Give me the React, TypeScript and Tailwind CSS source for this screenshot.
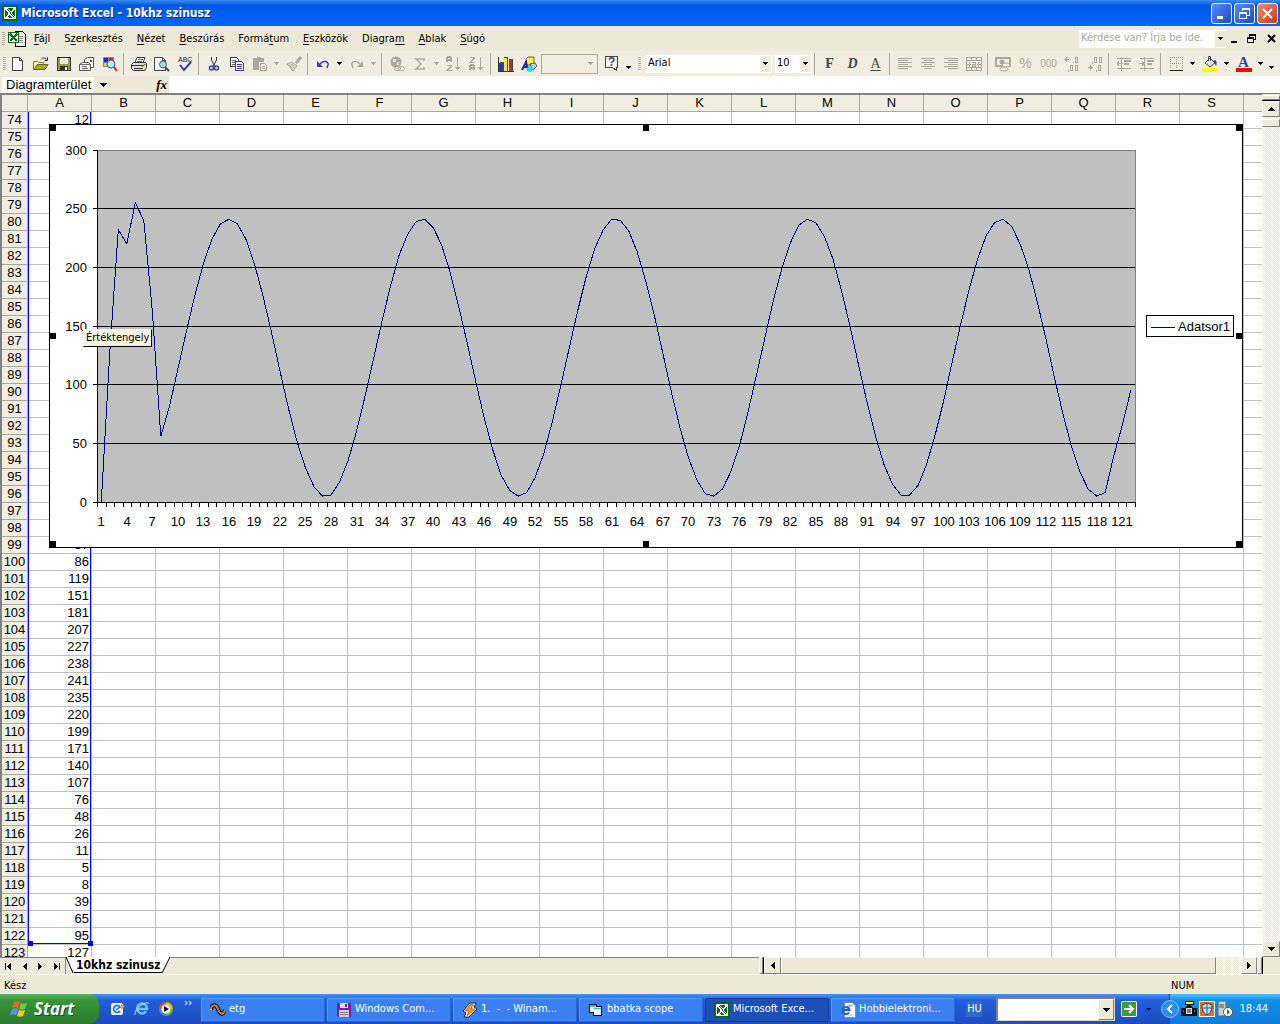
import { type ReactNode } from "react";
import clsx from "clsx";

// the last two columns have no heading of their own yet
const COLUMNS = [..."ABCDEFGHIJKLMNOPQRS".split(""), "", ""];
const FIRST_ROW = 74;
const LAST_ROW = 123;

const HEAD = [0, 128, 232, 220, 255, 240, 163, 56];
const TAIL = [57, 86, 119, 151, 181, 207, 227, 238, 241, 235, 220, 199, 171, 140, 107, 76, 48, 26, 11, 5, 8, 39, 65, 95];
const SAMPLES = [
    ...HEAD,
    ...Array.from({ length: 90 }, (_, i) =>
        Math.round(123 + 118.5 * Math.cos((2 * Math.PI * (i + 9 - 15.99)) / 22.72))
    ),
    ...TAIL,
];

// rows 75-98 lie completely behind the chart
const cellValue = (row: number) => {
    if (row === 74) return 12;
    if (row === 123) return 127;
    return row < 99 ? null : SAMPLES[row - 1];
};

/* ---------- small pieces ---------- */

function Svg({ children, w = 16, h = 16, smooth }: { children: ReactNode, w?: number, h?: number, smooth?: boolean }) {
    return (
        <svg
            width={w}
            height={h}
            viewBox={`0 0 ${w} ${h}`}
            fill="none"
            shapeRendering={smooth ? "auto" : "crispEdges"}
            className="shrink-0"
            aria-hidden="true"
        >
            {children}
        </svg>
    );
}

function Down() {
    return <Svg w={5} h={3}><path d="M0 0h5v1H0zM1 1h3v1H1zM2 2h1v1H2z" fill="currentColor" /></Svg>;
}

function Up() {
    return <Svg w={7} h={4}><path d="M3 0h1v1H3zM2 1h3v1H2zM1 2h5v1H1zM0 3h7v1H0z" fill="currentColor" /></Svg>;
}

function DownBig() {
    return <Svg w={7} h={4}><path d="M0 0h7v1H0zM1 1h5v1H1zM2 2h3v1H2zM3 3h1v1H3z" fill="currentColor" /></Svg>;
}

function Side({ right, bar }: { right?: boolean, bar?: boolean }) {
    return (
        <Svg w={7} h={7}>
            <g transform={right ? "matrix(-1 0 0 1 7 0)" : undefined} fill="currentColor">
                <path d="M2 3h1v1H2zM3 2h1v3H3zM4 1h1v5H4zM5 0h1v7H5z" />
                {bar && <path d="M0 0h1v7H0z" />}
            </g>
        </Svg>
    );
}

function Grip() {
    return (
        <Svg w={3} h={16}>
            <path d="M0 1h3v1H0zM0 3h3v1H0zM0 5h3v1H0zM0 7h3v1H0zM0 9h3v1H0zM0 11h3v1H0zM0 13h3v1H0z" fill="#b5b2a2" />
        </Svg>
    );
}

function Tool({ label, children, off }: { label: string, children: ReactNode, off?: boolean }) {
    return (
        <button
            aria-label={label}
            disabled={off}
            className={clsx("flex h-[22px] w-[23px] shrink-0 items-center justify-center", off ? "text-[#aca899]" : "text-black")}
        >
            {children}
        </button>
    );
}

function Drop({ label, off }: { label: string, off?: boolean }) {
    return (
        <button
            aria-label={label}
            disabled={off}
            className={clsx("flex h-[22px] w-[11px] shrink-0 items-center justify-center", off ? "text-[#aca899]" : "text-black")}
        >
            <Down />
        </button>
    );
}

function Sep() {
    return <span className="mx-[2px] h-[22px] w-[2px] shrink-0 border-l border-[#aca899]" />;
}

function ExcelIcon() {
    return (
        <Svg>
            <rect width="16" height="16" fill="#0a6b12" />
            <path d="M2 2h12v12H2zM3 3v10h10V3z" fill="#fff" fillRule="evenodd" />
            <path d="M3 3h3l7 9v1h-3L3 4z" fill="#fff" />
            <path d="M5 4h1l6 8h-1z" fill="#0a6b12" />
            <path d="M12.500 3.500L9 7.500M7 9.500l-3.500 3.500M3 12.500h4" stroke="#fff" strokeWidth="1.500" />
        </Svg>
    );
}

function Align({ kind }: { kind: "left" | "center" | "right" }) {
    const x = { left: 1, center: 4, right: 5 }[kind];
    const w = kind === "center" ? 8 : 10;
    return (
        <Svg>
            {[2, 4, 6, 8, 10, 12].map((y, i) => (
                <rect key={y} x={i % 2 ? x : 1} y={y} width={i % 2 ? w : 14} height="1" fill="currentColor" />
            ))}
        </Svg>
    );
}

function Decimal({ left }: { left?: boolean }) {
    return (
        <Svg>
            {/* zeros are 3x5 boxes with a comma in front */}
            {left ? (
                <path d="M11.500 1.500h2v5h-2zM6.500 9.500h2v5h-2zM11.500 9.500h2v5h-2zM9 6v1M4 14v2M0 3.500h5M2.500 1v5M1.500 2v3" stroke="currentColor" />
            ) : (
                <path d="M7.500 1.500h2v5h-2zM12.500 1.500h2v5h-2zM11.500 9.500h2v5h-2zM5 6v2M9 14v2M1 11.500h5M3.500 9v5M4.500 10v3" stroke="currentColor" />
            )}
        </Svg>
    );
}

function Indent({ right }: { right?: boolean }) {
    return (
        <Svg>
            <path d="M1 2.500h14M8 5.500h7M8 8.500h5M1 12.500h14M5.500 1v14" stroke="currentColor" />
            <path d="M8 4.500h7M8 7.500h5" stroke="currentColor" />
            <path d={right ? "M0 7.500h5M5 7.500l-2-2M5 7.500l-2 2" : "M1 7.500h6M1 7.500l2-2M1 7.500l2 2"} stroke="currentColor" />
        </Svg>
    );
}

function Sorting({ desc }: { desc?: boolean }) {
    const a = "M1 6V2l1-1h2l1 1v4M1 4h4";
    const z = "M1 1.500h4.500L1 6.500h5";
    return (
        <Svg>
            <path d={desc ? z : a} stroke="currentColor" strokeWidth="1.500" />
            <path d={desc ? a : z} transform="translate(0 8)" stroke="currentColor" strokeWidth="1.500" />
            <path d="M11 1h1v13h-1zM9 11h5v1H9zM10 12h3v1h-3z" fill="currentColor" />
        </Svg>
    );
}

/* ---------- bars ---------- */

function TitleBar() {
    const btn = "flex size-[21px] items-center justify-center rounded-[3px] border border-white";
    return (
        <header className="flex h-[26px] shrink-0 items-center gap-[3px] bg-linear-to-b from-[#3b8cf0] via-[#0058e6] via-20% to-[#0066ff] px-[2px]">
            <ExcelIcon />
            <h1 className="flex-1 font-[DejaVu_Sans_Condensed,sans-serif] text-[12px] font-bold text-white [text-shadow:1px_1px_#0a2a80]">
                Microsoft Excel - 10khz szinusz
            </h1>
            <div className="flex gap-[2px]">
                <button aria-label="Kis méret" className={clsx(btn, "bg-linear-to-br from-[#5b8cf0] to-[#1a48c8]")}>
                    <Svg w={13} h={13}><path d="M2 9h6v3H2z" fill="#fff" /></Svg>
                </button>
                <button aria-label="Előző méret" className={clsx(btn, "bg-linear-to-br from-[#5b8cf0] to-[#1a48c8]")}>
                    <Svg w={13} h={13}>
                        <path d="M4 1h8v8H9V8h2V3H5v1H4z" fill="#fff" />
                        <path d="M1 5h8v7H1zM2 7v4h6V7z" fill="#fff" fillRule="evenodd" />
                    </Svg>
                </button>
                <button aria-label="Bezárás" className={clsx(btn, "bg-linear-to-br from-[#f0886c] to-[#c83410]")}>
                    <Svg w={13} h={13} smooth><path d="M2 2l9 9M11 2l-9 9" stroke="#fff" strokeWidth="2" /></Svg>
                </button>
            </div>
        </header>
    );
}

// the underlined letter sits in the middle
const MENUS: [string, string, string][] = [
    ["", "F", "ájl"],
    ["S", "z", "erkesztés"],
    ["", "N", "ézet"],
    ["", "B", "eszúrás"],
    ["Formá", "t", "um"],
    ["", "E", "szközök"],
    ["Diagra", "m", ""],
    ["", "A", "blak"],
    ["", "S", "úgó"],
];

function MenuBar() {
    return (
        <nav className="flex h-[25px] shrink-0 items-center pr-1 pl-[2px]">
            <Grip />
            <span className="mr-px ml-[3px]">
                <Svg w={18} h={17}>
                    <path d="M7 1h7l3 3v12H7z" fill="#fff" stroke="#000" />
                    <path d="M11 6h4M11 8h4M11 10h4M11 12h4" stroke="#888" />
                    <rect x="0" y="2" width="11" height="11" fill="#0a6b12" />
                    <rect x="1" y="3" width="9" height="9" fill="#fff" />
                    <path d="M2 4l7 7M9 4l-7 7" stroke="#0a6b12" strokeWidth="2" />
                </Svg>
            </span>
            {MENUS.map(([before, key, after]) => (
                <button key={before + key + after} className="px-[7px] text-[11px] leading-4">
                    {before}<u className="underline-offset-2">{key}</u>{after}
                </button>
            ))}
            <div className="ml-auto flex h-[18px] items-center bg-white">
                <input
                    aria-label="Kérdés"
                    placeholder="Kérdése van? Írja be ide."
                    className="w-[136px] pl-[2px] text-[11px] placeholder:text-[#aca899]"
                />
                <button aria-label="Kérdések listája" className="flex h-4 w-[11px] items-center justify-center bg-[#ece9d8]"><Down /></button>
            </div>
            <div className="ml-1 flex items-center gap-[9px]">
                <button aria-label="Füzet kis mérete"><Svg w={8} h={9}><path d="M1 7h6v2H1z" fill="#000" /></Svg></button>
                <button aria-label="Füzet előző mérete">
                    <Svg w={9} h={9}>
                        <path d="M2 0h7v6H7V5h1V2H3v1H2zM0 3h7v6H0zM1 5v3h5V5z" fill="#000" fillRule="evenodd" />
                    </Svg>
                </button>
                <button aria-label="Füzet bezárása" className="ml-[2px]">
                    <Svg w={9} h={9} smooth><path d="M1 1l7 7M8 1l-7 7" stroke="#000" strokeWidth="2" /></Svg>
                </button>
            </div>
        </nav>
    );
}

function ToolBar() {
    return (
        <div className="flex h-[25px] shrink-0 items-center overflow-hidden bg-[#f0eee1] pl-[3px]">
            <Grip />
            <Tool label="Új">
                <Svg><path d="M2.500 1.500h7l3 3v10h-10z" fill="#fff" stroke="#444" /><path d="M9.500 1.500v3h3" stroke="#444" /></Svg>
            </Tool>
            <Tool label="Megnyitás">
                <Svg smooth>
                    <path d="M0.500 13.500v-8h4l1 1h5v2" fill="#ffff99" stroke="#777730" />
                    <path d="M1 13.500l3-5h11l-3 5z" fill="#a5a52a" stroke="#666620" />
                    <path d="M8 3.500c2-3 5-1 6 1M14.500 1.500v3h-3" stroke="#333" />
                </Svg>
            </Tool>
            <Tool label="Mentés">
                <Svg>
                    <rect x="1.500" y="1.500" width="13" height="13" fill="#9c9c3a" stroke="#333" />
                    <rect x="4" y="2" width="8" height="6" fill="#eee" />
                    <rect x="4" y="10" width="8" height="4" fill="#333" />
                    <rect x="9" y="11" width="2" height="3" fill="#fff" />
                </Svg>
            </Tool>
            <Tool label="E-mail">
                <Svg smooth>
                    <path d="M5.500 7V3.500l3-2h6v10h-4" fill="#fff" stroke="#555" />
                    <path d="M11 4h2v2h-2z" fill="#d22" />
                    <path d="M0.500 8.500l3-2h6l2 2v6h-11z" fill="#fff" stroke="#555" />
                    <path d="M0.500 8.500h11M3 10.500h5M3 12.500h6" stroke="#666688" />
                </Svg>
            </Tool>
            <Tool label="Keresés">
                <Svg smooth>
                    <rect x="1" y="1" width="11" height="10" fill="#888" />
                    <path d="M2 2h4v4H2z" fill="#22c" /><path d="M7 2h4v3H7z" fill="#d22" />
                    <path d="M2 7h4v3H2z" fill="#dd2" />
                    <circle cx="9" cy="8" r="4" fill="#aef" stroke="#555" />
                    <path d="M12 11l3 4" stroke="#d22" strokeWidth="2" />
                </Svg>
            </Tool>
            <Sep />
            <Tool label="Nyomtatás">
                <Svg smooth>
                    <path d="M4 6.500l2-5h8l-2 5" fill="#fff" stroke="#333" />
                    <path d="M7 3.500h5M6 5.500h5" stroke="#666" />
                    <path d="M0.500 8.500l2-2h12l1 1v4l-2 3h-11l-2-2z" fill="#ddd" stroke="#333" />
                    <path d="M1 9.500h12l2-2M3 12.500h9" stroke="#333" />
                    <path d="M10 10h2v1h-2z" fill="#cc0" />
                </Svg>
            </Tool>
            <Tool label="Nyomtatási kép">
                <Svg smooth>
                    <path d="M0.500 1.500h8l3 3v10h-11z" fill="#fff" stroke="#444" />
                    <path d="M8.500 1.500v3h3" stroke="#444" />
                    <circle cx="9" cy="8.500" r="3.500" fill="#9dd" stroke="#555" />
                    <path d="M11 11l4 4" stroke="#444" strokeWidth="2" />
                </Svg>
            </Tool>
            <Tool label="Helyesírás">
                <Svg smooth>
                    <text x="1" y="6" fontSize="7" fontFamily="Liberation Sans" fill="#222">ABC</text>
                    <path d="M3 9l4 5 7-8" stroke="#3a3aa8" strokeWidth="2" />
                </Svg>
            </Tool>
            <Sep />
            <Tool label="Kivágás">
                <Svg smooth>
                    <path d="M5.500 1v3l3 6M10.500 1v3l-3 6" stroke="#333" />
                    <circle cx="5.500" cy="12" r="2" stroke="#3a3aa8" strokeWidth="1.500" />
                    <circle cx="10.500" cy="12" r="2" stroke="#3a3aa8" strokeWidth="1.500" />
                </Svg>
            </Tool>
            <Tool label="Másolás">
                <Svg>
                    <path d="M1.500 1.500h6l2 2v7h-8z" fill="#fff" stroke="#444" />
                    <path d="M3 4.500h4M3 6.500h4M3 8.500h3" stroke="#666" />
                    <path d="M6.500 5.500h6l2 2v7h-8z" fill="#fff" stroke="#3a3aa8" />
                    <path d="M8 8.500h5M8 10.500h5M8 12.500h5" stroke="#3a3aa8" />
                </Svg>
            </Tool>
            <Tool label="Beillesztés" off>
                <Svg>
                    <path d="M1 2h3l1-1h3l1 1h3v4H7v8H1z" fill="#aca899" />
                    <path d="M8.500 7.500h4l2 2v5h-6z" fill="#f0eee1" stroke="#aca899" />
                    <path d="M10 10.500h3M10 12.500h3" stroke="#aca899" />
                </Svg>
            </Tool>
            <Drop label="Beillesztés lista" off />
            <Tool label="Formátummásoló" off>
                <Svg smooth>
                    <path d="M15 1l-5 6" stroke="#aca899" strokeWidth="3" />
                    <path d="M1 8l5-2 5 4-4 5z" fill="#d8d5c6" stroke="#aca899" />
                    <path d="M3 9l4 4M5 8l4 4" stroke="#aca899" />
                </Svg>
            </Tool>
            <Sep />
            <Tool label="Visszavonás">
                <Svg w={14} h={10} smooth>
                    <path d="M1 2v6h6z" fill="#3a3aa8" />
                    <path d="M4 5c3-4 9-3 8 1l-1 3" stroke="#3a3aa8" strokeWidth="1.500" />
                </Svg>
            </Tool>
            <Drop label="Visszavonás lista" />
            <Tool label="Ismét" off>
                <Svg w={14} h={10} smooth>
                    <path d="M13 2v6H7z" fill="currentColor" />
                    <path d="M10 5C7 1 1 2 2 6l1 3" stroke="currentColor" strokeWidth="1.500" />
                </Svg>
            </Tool>
            <Drop label="Ismét lista" off />
            <Sep />
            <Tool label="Hivatkozás" off>
                <Svg smooth>
                    <circle cx="7" cy="6" r="5.500" fill="#aca899" />
                    <path d="M4 3h3v3H4zM8 6h2v3H8z" fill="#e4e1d2" />
                    <rect x="5.500" y="10.500" width="6" height="4" rx="2" fill="#f0eee1" stroke="#aca899" />
                    <rect x="9.500" y="10.500" width="6" height="4" rx="2" stroke="#aca899" />
                </Svg>
            </Tool>
            <Tool label="AutoSzum" off>
                <Svg smooth><path d="M12 5V3H4l5 5-5 5h8v-2" stroke="currentColor" strokeWidth="1.500" /></Svg>
            </Tool>
            <Drop label="AutoSzum lista" off />
            <Tool label="Növekvő rendezés" off><Sorting /></Tool>
            <Tool label="Csökkenő rendezés" off><Sorting desc /></Tool>
            <Sep />
            <Tool label="Diagram varázsló">
                <Svg>
                    <path d="M0.500 1v14.500H16" stroke="#333" />
                    <path d="M1 7h4v8H1z" fill="#2233cc" /><path d="M6 2h3v13H6z" fill="#ffe833" /><path d="M11 4h3v11h-3z" fill="#dd2222" />
                    <path d="M5.500 6v9M9.500 1v14M14.500 3v12M6 1.500h4M11 3.500h4M2 6.500h4" stroke="#444" />
                </Svg>
            </Tool>
            <Tool label="Rajz">
                <Svg smooth>
                    <path d="M5 3l2-2h6v8H5z" fill="#fe3" stroke="#666" />
                    <path d="M1 14L5 6l2 8M2 11h5" stroke="#22a" strokeWidth="2" />
                    <path d="M9 8l5-1 2 3-4 4z" fill="#ccd" stroke="#555" />
                    <circle cx="9" cy="13" r="3" fill="#0ee" />
                </Svg>
            </Tool>
            <button aria-label="Nagyítás" disabled className="ml-px flex h-5 w-[57px] shrink-0 items-center justify-end border border-[#aca899] pr-1 text-[#aca899]">
                <Down />
            </button>
            <span className="w-[2px]" />
            <Tool label="Súgó">
                <Svg>
                    <path d="M1.500 0.500h12v11h-1v3l-4-3h-7z" fill="#fff" stroke="#444" />
                    <path d="M11 12l1 2v-2" fill="#ee3" />
                    <text x="4" y="10" fontSize="12" fontWeight="bold" fontFamily="Liberation Sans" fill="#3a3aa8">?</text>
                </Svg>
            </Tool>
            <span className="mt-2"><Drop label="Eszköztár beállításai" /></span>
            <span className="mr-[5px] ml-1"><Grip /></span>

            <label className="relative flex h-[18px] w-[126px] shrink-0 items-center bg-white">
                <select aria-label="Betűtípus" className="w-full appearance-none pl-[2px] text-[11px]">
                    <option>Arial</option>
                </select>
                <span className="pointer-events-none absolute right-px flex h-4 w-[11px] items-center justify-center bg-[#f0eee1]"><Down /></span>
            </label>
            <label className="relative ml-[3px] flex h-[18px] w-[37px] shrink-0 items-center bg-white">
                <select aria-label="Betűméret" className="w-full appearance-none pl-[2px] text-[11px]">
                    <option>10</option>
                </select>
                <span className="pointer-events-none absolute right-px flex h-4 w-[11px] items-center justify-center bg-[#f0eee1]"><Down /></span>
            </label>
            <Sep />
            <Tool label="Félkövér"><b className="font-[Liberation_Serif,serif] text-[14px] text-[#444]">F</b></Tool>
            <Tool label="Dőlt"><b className="font-[Liberation_Serif,serif] text-[14px] text-[#444] italic">D</b></Tool>
            <Tool label="Aláhúzott"><span className="font-[Liberation_Serif,serif] text-[14px] text-[#444] underline underline-offset-2">A</span></Tool>
            <Sep />
            <Tool label="Balra" off><Align kind="left" /></Tool>
            <Tool label="Középre" off><Align kind="center" /></Tool>
            <Tool label="Jobbra" off><Align kind="right" /></Tool>
            <Tool label="Cellaegyesítés" off>
                <Svg>
                    <rect x="0.500" y="1.500" width="15" height="13" stroke="currentColor" />
                    <path d="M0 4.500h16M0 11.500h16M5.500 1v3M10.500 1v3M5.500 12v3M10.500 12v3M1 8.500h4M11 8.500h4M3.500 6v5M12.500 6v5" stroke="currentColor" />
                    <path d="M6 6.500h3.500v4H6.500v-2H9" stroke="currentColor" />
                </Svg>
            </Tool>
            <Sep />
            <Tool label="Pénznem" off>
                <Svg smooth>
                    <rect x="1" y="2" width="14" height="8" stroke="currentColor" strokeWidth="2" />
                    <circle cx="7" cy="6" r="2.500" fill="currentColor" />
                    <ellipse cx="11" cy="9" rx="4" ry="2" fill="#f0eee1" stroke="currentColor" />
                    <ellipse cx="9" cy="13" rx="4" ry="2" fill="#f0eee1" stroke="currentColor" />
                </Svg>
            </Tool>
            <Tool label="Százalék" off><span className="font-[Liberation_Sans,sans-serif] text-[14px]">%</span></Tool>
            <Tool label="Ezres csoport" off><span className="font-[Liberation_Sans,sans-serif] text-[10px]">000</span></Tool>
            <Tool label="Tizedeshelyek növelése" off><Decimal left /></Tool>
            <Tool label="Tizedeshelyek csökkentése" off><Decimal /></Tool>
            <Sep />
            <Tool label="Behúzás csökkentése" off><Indent /></Tool>
            <Tool label="Behúzás növelése" off><Indent right /></Tool>
            <Sep />
            <Tool label="Szegélyek">
                <Svg>
                    <path d="M2 1.500h13M2 7.500h13M2.500 1v12M8.500 1v12M14.500 1v12" stroke="#999" strokeDasharray="1 1" />
                    <path d="M2 14.500h13" stroke="#222" />
                </Svg>
            </Tool>
            <Drop label="Szegélyek lista" />
            <Tool label="Kitöltőszín">
                <Svg smooth>
                    <path d="M3 7l5-5 5 5-5 4z" fill="#ddd" stroke="#444" />
                    <path d="M6.500 5V0.500h2V5" stroke="#444" />
                    <path d="M12 4c3 0 3 3 2 6l-2-4z" fill="#3a3aa8" />
                    <rect y="12" width="16" height="4" fill="#ff0" />
                </Svg>
            </Tool>
            <Drop label="Kitöltőszín lista" />
            <Tool label="Betűszín">
                <Svg>
                    <text x="2" y="11" fontSize="15" fontWeight="bold" fontFamily="Liberation Serif" fill="#3a3aa8">A</text>
                    <rect y="12" width="16" height="4" fill="#f00" />
                </Svg>
            </Tool>
            <Drop label="Betűszín lista" />
            <span className="mt-2"><Drop label="Formázás beállításai" /></span>
        </div>
    );
}

function FormulaBar() {
    return (
        <div className="flex h-[17px] shrink-0 items-center bg-[#ece9d8] pl-[2px] font-[Liberation_Sans,sans-serif] text-[13px] leading-4">
            <input aria-label="Név mező" defaultValue="Diagramterület" className="h-4 w-[92px] bg-white pl-1" />
            <button aria-label="Nevek" className="flex w-[19px] justify-center"><DownBig /></button>
            <button aria-label="Függvény beszúrása" className="ml-auto font-[Liberation_Serif,serif] text-[13px] font-bold italic">fx</button>
            <input aria-label="Szerkesztőléc" className="ml-[2px] h-[17px] w-[calc(100%-167px)] bg-white" />
        </div>
    );
}

/* ---------- chart ---------- */

// Geometry inside the chart frame
const PLOT = { x: 47, y: 25, w: 1038, h: 352 };
const STEP = PLOT.w / SAMPLES.length;
const px = (i: number) => PLOT.x + (i + 0.5) * STEP;
const py = (v: number) => PLOT.y + PLOT.h - (v / 300) * PLOT.h;

function Chart() {
    const points = SAMPLES.map((v, i) => `${px(i).toFixed(1)},${py(v).toFixed(1)}`).join(" ");
    return (
        <div className="absolute top-[29px] left-[47px] h-[424px] w-[1194px] border border-black bg-white">
            <svg
                viewBox="0 0 1192 422"
                className="block size-full font-[Liberation_Sans,sans-serif] text-[13px]"
                shapeRendering="crispEdges"
            >
                <rect x={PLOT.x} y={PLOT.y} width={PLOT.w} height={PLOT.h} fill="#c0c0c0" />
                <path d={`M${PLOT.x} ${PLOT.y}.5H${PLOT.x + PLOT.w}V${PLOT.y + PLOT.h}`} stroke="#808080" fill="none" />
                {[0, 50, 100, 150, 200, 250, 300].map((v) => {
                    const y = Math.floor(py(v));
                    return (
                        <g key={v}>
                            {v < 300 && <rect x={PLOT.x} y={y} width={PLOT.w} height="1" />}
                            <rect x={PLOT.x - 4} y={y} width="5" height="1" />
                            <text x={PLOT.x - 10} y={y + 5} textAnchor="end">{v}</text>
                        </g>
                    );
                })}
                <rect x={PLOT.x} y={PLOT.y} width="1" height={PLOT.h} />
                {Array.from({ length: SAMPLES.length + 1 }, (_, i) => (
                    <rect key={i} x={Math.round(PLOT.x + i * STEP)} y={PLOT.y + PLOT.h} width="1" height="5" />
                ))}
                {SAMPLES.map((_, i) => i % 3 === 0 && (
                    <text key={i} x={Math.round(px(i))} y={PLOT.y + PLOT.h + 24} textAnchor="middle">{i + 1}</text>
                ))}
                <polyline points={points} fill="none" stroke="#000080" />

                <rect x="1096.500" y="190.500" width="87" height="21" fill="#fff" stroke="#000" />
                <rect x="1101" y="202" width="24" height="1" fill="#000080" />
                <text x="1128" y="206">Adatsor1</text>

                {[0, 593, 1186].map((x) => [0, 208, 416].map((y) => (
                    !(x === 593 && y === 208) && <rect key={`${x}-${y}`} x={x} y={y} width="6" height="6" />
                )))}
            </svg>
            <div role="tooltip" className="absolute top-[204px] left-[33px] border border-[#fff] border-r-black border-b-black bg-[#f5f3e6] px-[2px] text-[11px] leading-4 whitespace-nowrap">
                Értéktengely
            </div>
        </div>
    );
}

/* ---------- sheet ---------- */

const raised = "border border-t-white border-l-white border-r-[#808080] border-b-[#808080] bg-[#ece9d8]";
const dither = "bg-[repeating-conic-gradient(#fff_0_25%,#ece9d8_0_50%)] bg-[length:2px_2px]";

function Sheet() {
    const rows = Array.from({ length: LAST_ROW - FIRST_ROW + 1 }, (_, i) => FIRST_ROW + i);
    const head = "border-r border-b border-[#aca899] bg-[#f0eee1] p-0 font-normal";
    return (
        <div className="flex min-h-0 flex-1 border-t border-[#808080]">
            <div className="relative min-w-0 flex-1 overflow-hidden border-t border-l-2 border-[#808080] bg-white">
                <table className="w-[1370px] table-fixed border-separate border-spacing-0 font-[Liberation_Sans,sans-serif] text-[13px] leading-4">
                    <colgroup>
                        <col className="w-[26px]" />
                        {COLUMNS.map((_, i) => <col key={i} className="w-16" />)}
                    </colgroup>
                    <thead>
                        <tr>
                            <td className={head} />
                            {COLUMNS.map((c, i) => <th key={i} scope="col" className={head}>{c}</th>)}
                        </tr>
                    </thead>
                    <tbody>
                        {rows.map((row) => (
                            <tr key={row}>
                                <th scope="row" className={head}>{row}</th>
                                {COLUMNS.map((c, i) => (
                                    <td key={i} className="h-[17px] border-r border-b border-[#c0c0c0] p-0 pr-[2px] text-right">
                                        {c === "A" ? cellValue(row) : null}
                                    </td>
                                ))}
                            </tr>
                        ))}
                    </tbody>
                </table>

                {/* source range of the chart */}
                <div className="absolute top-[17px] left-[26px] h-[832px] w-[63px] border border-t-0 border-[#0000ff]">
                    <span className="absolute -bottom-[3px] -left-px size-[5px] bg-[#0000ff]" />
                    <span className="absolute -right-[3px] -bottom-[3px] size-[5px] bg-[#0000ff]" />
                </div>
                <Chart />
            </div>

            <div className="flex w-[18px] shrink-0 flex-col">
                <div className={clsx(raised, "mt-px h-[5px]")} />
                <div className="h-px bg-black" />
                <button aria-label="Fel" className={clsx(raised, "flex h-4 items-center justify-center")}><Up /></button>
                <div className={clsx("flex-1 pt-[2px]", dither)}>
                    <div className={clsx(raised, "h-2")} />
                </div>
                <button aria-label="Le" className={clsx(raised, "flex h-4 items-center justify-center")}><DownBig /></button>
            </div>
        </div>
    );
}

function SheetTabs() {
    return (
        <div className="flex h-[17px] shrink-0">
            <div className="flex w-[66px] items-center justify-around border-t border-r border-[#808080]">
                <button aria-label="Első lap"><Side bar /></button>
                <button aria-label="Előző lap"><Side /></button>
                <button aria-label="Következő lap"><Side right /></button>
                <button aria-label="Utolsó lap"><Side right bar /></button>
            </div>
            <button className="flex h-4 text-[12px] leading-4 font-bold">
                <Svg w={8} h={16} smooth><path d="M0 0h8v16z" fill="#fff" /><path d="M0 0l7 16" stroke="#000" /></Svg>
                <span className="border-b border-black bg-white px-[2px]">10khz szinusz</span>
                <Svg w={8} h={16} smooth><path d="M8 0H0v16z" fill="#fff" /><path d="M8 0L0 16" stroke="#000" /></Svg>
            </button>
            <div className="flex-1 border-t border-[#808080]" />
            <div className="flex w-[504px]">
                <div className={clsx(raised, "w-1")} />
                <div className="w-px bg-black" />
                <button aria-label="Balra görgetés" className={clsx(raised, "flex w-[17px] items-center justify-center")}><Side /></button>
                <div className={clsx("flex flex-1", dither)}>
                    <div className={clsx(raised, "w-[435px]")} />
                </div>
                <button aria-label="Jobbra görgetés" className={clsx(raised, "flex w-4 items-center justify-center")}><Side right /></button>
                <div className={clsx(raised, "w-[5px]")} />
                <div className="w-px bg-black" />
            </div>
            <div className="w-[17px]" />
        </div>
    );
}

/* ---------- taskbar ---------- */

function Flag() {
    return (
        <Svg w={20} h={18} smooth>
            <path d="M4 2c2-1 4-1 6 0L8 8C6 7 4 7 2 8z" fill="#f0602c" />
            <path d="M11 3c2 1 4 1 6 0l-2 6c-2 1-4 1-6 0z" fill="#7cc63c" />
            <path d="M2 9c2-1 4-1 6 0l-2 6c-2-1-4-1-6 0z" fill="#5a90f4" />
            <path d="M9 10c2 1 4 1 6 0l-2 6c-2 1-4 1-6 0z" fill="#fcc828" />
        </Svg>
    );
}

function IeIcon() {
    return (
        <Svg smooth>
            <path d="M12 10.500A5 5 0 1 1 13 8H4" stroke="#6fc0ff" strokeWidth="2.500" />
            <path d="M1 14C-1 10 10 0 15 2" stroke="#bfe4ff" />
        </Svg>
    );
}

const TASKS: { title: string, icon: ReactNode, active?: boolean }[] = [
    {
        title: "etg",
        icon: (
            <Svg smooth>
                <path d="M1 8c0-6 5-6 7-1s5 7 7 1" stroke="#000" strokeWidth="4" />
                <path d="M1 8c0-6 5-6 7-1s5 7 7 1" stroke="#e8c020" strokeWidth="2" />
                <path d="M1 7c0-5 5-5 7 0s5 6 7 1" stroke="#c03080" />
            </Svg>
        ),
    },
    {
        title: "Windows Com...",
        icon: (
            <Svg>
                <path d="M1 1h14v14H2l-1-1z" fill="#7a1fa0" />
                <path d="M4 1h8v5H4z" fill="#ddd" /><path d="M9 2h2v3H9z" fill="#7a1fa0" />
                <path d="M3 8h10v7H3z" fill="#ccc" /><path d="M4 10.500h8M4 12.500h8" stroke="#888" />
            </Svg>
        ),
    },
    {
        title: "1.  -  - Winam...",
        icon: (
            <Svg smooth>
                <path d="M8 1l6-0-2 4 3 2-8 8H2l2-4-3-2z" fill="#fff" stroke="#222" />
                <path d="M9 2L3 9h4l-2 5 8-7H9l2-5z" fill="#f8981c" stroke="#c86a10" />
            </Svg>
        ),
    },
    {
        title: "bbatka scope",
        icon: (
            <Svg>
                <path d="M1.500 2.500h7v2h5v9h-8v-3h-4z" fill="#fff" stroke="#000" />
                <path d="M2 3h6v2H2zM6 6h7v1H6z" fill="#2cc" />
                <path d="M14 12h2v2h-2z" fill="#888" />
            </Svg>
        ),
    },
    { title: "Microsoft Exce...", icon: <ExcelIcon />, active: true },
    {
        title: "Hobbielektroni...",
        icon: (
            <Svg smooth>
                <path d="M4.500 0.500h8l3 3v12h-11z" fill="#fff" stroke="#888" />
                <path d="M6 13h7M9 3h4" stroke="#bbb" />
                <path d="M9 10.500A3.500 3.500 0 1 1 9.500 8H3" stroke="#1c5fc8" strokeWidth="2" />
                <path d="M0 12C0 8 8 3 11 4" stroke="#2a80e0" />
            </Svg>
        ),
    },
];

function Taskbar() {
    return (
        <footer className="flex h-[30px] shrink-0 items-stretch bg-linear-to-b from-[#4a94f4] via-[#245edb] via-20% to-[#1c4cc0] text-[11px] text-white">
            <button className="flex w-[99px] shrink-0 items-center gap-1 rounded-r-[10px] bg-linear-to-b from-[#5cb45c] via-[#3a943a] via-20% to-[#2c7c2c] pl-[10px] font-[Open_Sans,sans-serif] text-[17px] font-bold italic [text-shadow:1px_1px_#1c4c1c]">
                <Flag />Start
            </button>
            <div className="flex w-[102px] shrink-0 items-center gap-2 pl-[11px]">
                <button aria-label="Outlook Express">
                    <Svg smooth>
                        <rect x="1" y="2" width="12" height="12" rx="2" fill="#e8f4ff" />
                        <path d="M10 10a3.500 3.500 0 1 1 0-4L6 9" stroke="#1c70c8" strokeWidth="1.500" />
                        <path d="M11 3l4 2-4 4z" fill="#f8a020" />
                    </Svg>
                </button>
                <button aria-label="Internet Explorer"><IeIcon /></button>
                <button aria-label="Media Player">
                    <Svg smooth>
                        <path d="M8 1a7 7 0 0 1 7 7H8z" fill="#f0b020" /><path d="M15 8a7 7 0 0 1-7 7V8z" fill="#6cb830" />
                        <path d="M8 15a7 7 0 0 1-7-7h7z" fill="#3c8cf0" /><path d="M1 8a7 7 0 0 1 7-7v7z" fill="#e85020" />
                        <circle cx="8" cy="8" r="4.500" fill="#fff" /><path d="M6 5l5 3-5 3z" fill="#111" />
                    </Svg>
                </button>
                <button aria-label="További ikonok" className="mb-3 ml-[2px]">
                    <Svg w={9} h={6} smooth><path d="M1 1l2 2-2 2M5 1l2 2-2 2" stroke="#9cc8ff" strokeWidth="1.500" /></Svg>
                </button>
            </div>
            <div className="flex min-w-0 flex-1 items-center gap-[2px]">
                {TASKS.map(({ title, icon, active }) => (
                    <button
                        key={title}
                        className={clsx(
                            "mt-px flex h-6 w-[124px] min-w-0 items-center gap-[3px] rounded-[2px] border pl-2",
                            active ? "border-[#163c94] bg-[#1c4fb8]" : "border-[#5a9cfa] border-r-[#2c64d4] border-b-[#2c64d4] bg-[#3b80f2]"
                        )}
                    >
                        {icon}
                        <span className="truncate whitespace-pre">{title}</span>
                    </button>
                ))}
            </div>
            <button aria-label="Nyelv: HU" className="my-[7px] mr-[14px] ml-2 w-4 shrink-0 bg-[#3068cc]">HU</button>
            <div className="my-[3px] flex w-[119px] shrink-0 border border-t-2 border-l-2 border-[#d8d5c6] border-t-[#808080] border-l-[#808080] bg-white text-black">
                <input aria-label="Cím" className="min-w-0 flex-1" />
                <button aria-label="Címek" className={clsx(raised, "flex w-4 items-center justify-center")}><DownBig /></button>
            </div>
            <button aria-label="Ugrás" className="ml-[6px] shrink-0">
                <Svg smooth>
                    <rect x="0.500" y="0.500" width="15" height="15" rx="1" fill="#3c9c3c" stroke="#fff" />
                    <path d="M3 8h9M8 4l4 4-4 4" stroke="#fff" strokeWidth="2" />
                </Svg>
            </button>
            <button aria-label="Hivatkozások" className="mr-[18px] ml-[9px] shrink-0 text-[#0a1c50]"><Down /></button>
            <div className="flex shrink-0 items-center gap-[2px] border-l border-[#0c48a8] bg-linear-to-b from-[#4cc0f8] via-[#1290e8] via-20% to-[#0f7cd8] pr-3">
                <button aria-label="Rejtett ikonok" className="-ml-[9px]">
                    <Svg w={18} h={18} smooth>
                        <circle cx="9" cy="9" r="8.500" fill="#2c8cf0" stroke="#7cc4ff" />
                        <path d="M11 5L7 9l4 4" stroke="#fff" strokeWidth="2" />
                    </Svg>
                </button>
                <Svg>
                    <path d="M4 0h8v3H4z" fill="#ee3" stroke="#000" />
                    <path d="M0 7h4l2-3h4l2 3h4v8H0z" fill="#111" />
                    <circle cx="8" cy="10" r="3" fill="#777" stroke="#ddd" />
                    <path d="M2 9h1v2H2zM13 9h1v2h-1z" fill="#d33" />
                </Svg>
                <Svg smooth>
                    <rect x="0.500" y="0.500" width="15" height="15" fill="#f46c10" stroke="#fff" />
                    <path d="M3 4l5-2 5 2c0 5-1 8-5 10C4 12 3 9 3 4z" fill="#bfe0f8" stroke="#235" />
                    <path d="M8 3v10M4 7h8" stroke="#1c60a8" />
                </Svg>
                <Svg smooth>
                    <path d="M1 1l2-1h6v14l-2 1H1z" fill="#ccc" stroke="#666" />
                    <path d="M2 4h5M2 6h5" stroke="#555" />
                    <circle cx="11" cy="11" r="4.500" fill="#fff" stroke="#555" />
                    <path d="M10 8l3 3-3 3z" fill="#109010" />
                </Svg>
                <time className="ml-1">18:44</time>
            </div>
        </footer>
    );
}

export default function App() {
    return (
        <div className="flex h-screen flex-col overflow-hidden bg-[#ece9d8] font-[DejaVu_Sans_Condensed,sans-serif] text-[11px] text-black">
            <TitleBar />
            <MenuBar />
            <ToolBar />
            <FormulaBar />
            <Sheet />
            <SheetTabs />
            <div className="flex h-5 shrink-0 items-center border-t border-white pt-[3px] pl-1 leading-4">
                <span className="flex-1">Kész</span>
                <span className="w-[109px]">NUM</span>
            </div>
            <Taskbar />
        </div>
    );
}
